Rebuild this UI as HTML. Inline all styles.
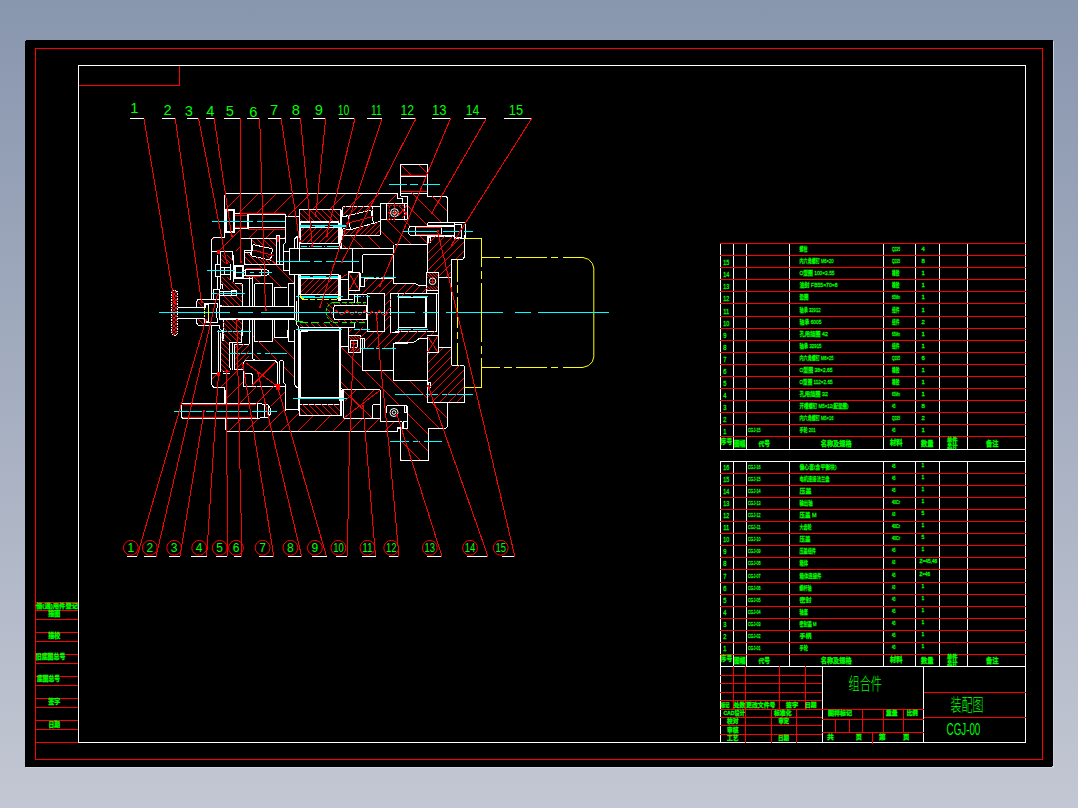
<!DOCTYPE html>
<html lang="zh"><head><meta charset="utf-8"><title>CGJ-00 装配图</title>
<style>
html,body{margin:0;padding:0;width:1078px;height:808px;overflow:hidden;background:#a6aec0;}
body{background:linear-gradient(to bottom,#8896ae 0px,#c3c7d3 808px);font-family:"Liberation Sans","Noto Sans CJK SC",sans-serif;}
svg{position:absolute;left:0;top:0;display:block}
text{font-family:"Liberation Sans","Noto Sans CJK SC",sans-serif;fill:#00ff00}
.w{stroke:#fff;fill:none;stroke-width:1}
.r{stroke:#ff0000;fill:none;stroke-width:1}
.c{stroke:#00ffff;fill:none;stroke-width:1}
.y{stroke:#ffff00;fill:none;stroke-width:1}
.g{stroke:#00ff00;fill:none;stroke-width:1}
.aa{shape-rendering:geometricPrecision}
</style></head><body>
<svg width="1078" height="808" viewBox="0 0 1078 808" shape-rendering="crispEdges">
<!-- 01_frame.svg -->
<path d="M1053.5 41V767.5M26 767.5H1054" stroke="#cdd3e2" stroke-width="1" fill="none"/>
<rect x="25" y="40" width="1028" height="727" rx="2" ry="2" fill="#000"/>
<rect x="35.5" y="48.5" width="1007" height="711" class="r"/>
<path class="r" d="M35 602.5H78M35 610.5H78M35 619.5H78M35 632.5H78M35 641.5H78M35 654.5H78M35 663.5H78M35 676.5H78M35 685.5H78M35 698.5H78M35 707.5H78M35 720.5H78M35 729.5H78M35 742.5H78"/>
<path class="r" d="M78 85.5H180M179.5 65V86"/>
<rect x="78.5" y="65.5" width="947" height="677" class="w"/>

<!-- 02_tables.svg -->
<path class="w" d="M720.5 243V450M733.5 243V450M746.5 243V450M789.5 243V450M883.5 243V450M915.5 243V450M939.5 243V450M967.5 243V450M720 449.5H1026M720.5 461V667M733.5 461V667M746.5 461V667M789.5 461V667M883.5 461V667M915.5 461V667M939.5 461V667M967.5 461V667M720 461.5H1026M720 666.5H1026M720.5 666V743M822.5 666V743M923.5 666V743"/>
<path class="r" d="M720 243.5H1026M720 255.5H1026M720 267.5H1026M720 279.5H1026M720 291.5H1026M720 303.5H1026M720 316.5H1026M720 328.5H1026M720 340.5H1026M720 352.5H1026M720 364.5H1026M720 376.5H1026M720 388.5H1026M720 400.5H1026M720 412.5H1026M720 424.5H1026M720 436.5H1026M720 473.5H1026M720 485.5H1026M720 497.5H1026M720 509.5H1026M720 521.5H1026M720 533.5H1026M720 545.5H1026M720 557.5H1026M720 569.5H1026M720 582.5H1026M720 594.5H1026M720 606.5H1026M720 618.5H1026M720 630.5H1026M720 642.5H1026M720 654.5H1026M733.5 666V710M745.5 666V710M779.5 666V710M805.5 666V710M720 675.5H822M720 683.5H822M720 692.5H822M720 700.5H822M720 709.5H924M720 717.5H822M720 725.5H822M720 734.5H822M745.5 709V743M771.5 709V743M796.5 709V743M822 719.5H924M822 732.5H924M835.5 719V733M849.5 719V733M862.5 709V733M883.5 709V733M903.5 709V733M872.5 732V744M924 692.5H1026M924 717.5H1026"/>

<!-- 10_t_200_180.svg -->
<path class="w" d="M224.5 237.6L224.5 196L226.6 193.5L307.9 193.5M224.5 237.6L214 237.6L211.5 240.1L211.5 261M211.5 251.6L232.1 251.6L232.1 261M220.5 251.6L220.5 261M225.6 209.1L234.6 209.1L234.6 232.6L225.6 232.6ZM226.9 210.9L233.3 210.9L233.3 231.3L226.9 231.3ZM234.6 213.6L248.1 213.6M234.6 228.6L248.1 228.6M247.3 213.6L247.3 228.6M248.3 213.6L248.3 228.6M248.1 214.8L285.2 214.8M248.1 227.8L285.2 227.8M285.2 213.6L285.2 243.1L283.7 244.6L283.7 261M285.2 216.9L299.2 216.9M299.2 209.6L299.2 261M299.2 209.6L307.9 209.6M240.1 238.1L285.2 238.1M240.1 238.1L240.1 261M276.7 261L276.7 235.1L279.7 235.1L279.7 261M251.6 239.1L251.6 250.1L244.1 250.1L244.1 261M253.1 244.6L272.6 248.9L270.5 260.2L251.1 255.9ZM283.7 251.6L289.2 251.6M289.2 248.1L307.9 248.1M289.2 248.1L289.2 261M294.2 239.1L297.7 236.1L297.7 248.1M294.2 239.1L294.2 248.1"/>
<path class="r" d="M235.1 215.1L247.1 215.1M235.1 227.1L247.1 227.1M240.1 213.1L285.2 213.1M248.1 229.1L285.2 229.1M277.4 236.1L278.7 236.1L278.7 241.6L277.4 241.6ZM278 236.1L278 241.6M241.3 193.7L226.1 208.9M258.3 193.7L238.6 213.4M276.3 193.7L257.1 212.9M293.3 193.7L274.1 212.9M307.9 196.1L287.3 216.7M214.2 237.8L211.7 240.3M240.9 229.1L218.6 251.4M257.8 229.2L249.1 237.9M240.1 246.9L235.6 251.4M274.8 229.2L266.1 237.9M285.2 236.8L284.1 237.9"/>
<path class="c" d="M212 221.4L252.6 221.4M257.1 221.4L285.2 221.4"/>

<!-- 11_t_300_180.svg -->
<path class="w" d="M300 193.5L397.7 193.5L397.7 198L402.2 198L402.2 203.5M400.7 180L400.7 196M400.7 196L407.9 196M300 209.6L339.9 209.6L340.6 210.3L340.6 248.1M341.6 209.6L341.6 248.1M300 221.6L338.6 221.6M300 222.6L338.6 222.6M338.6 221.6L338.6 244.1M339.6 222.6L339.6 248.1M300.5 222.6L300.5 244.1M300.5 227.6L338.6 227.6M300.5 243.6L338.6 243.6M300 248.6L393.2 248.6"/>
<path class="r" d="M401.2 191.5L407.9 191.5M300.0 219.0L302.3 221.3M300.0 213.0L308.3 221.3M303.1 210.1L314.3 221.3M310.1 210.1L321.3 221.3M316.1 210.1L327.3 221.3M322.1 210.1L333.3 221.3M328.1 210.1L339.3 221.3M334.1 210.1L340.1 216.1M303.9 228.1L300.8 231.2M309.9 228.1L300.8 237.2M315.9 228.1L300.8 243.2M321.9 228.1L306.7 243.3M327.9 228.1L312.7 243.3M333.9 228.1L318.7 243.3M338.4 229.6L324.7 243.3M338.4 235.6L330.7 243.3M338.4 242.6L337.7 243.3M310.3 193.7L300.0 204.0M328.3 193.7L312.8 209.2M345.3 193.7L329.8 209.2M362.3 193.7L349.6 206.4M379.3 193.7L366.6 206.4M397.3 193.7L387.7 203.3"/>
<path class="c" d="M389.2 184.5L406.7 184.5M300 225.3L310 225.3M312 225.3L328.1 225.3M330.1 225.3L345.6 225.3M300 226.3L310 226.3M315 226.3L325.1 226.3M333.1 226.3L345.6 226.3M301 246.3L307 246.3M308.5 246.3L310 246.3M311.5 246.3L322 246.3M323.5 246.3L325.1 246.3M326.6 246.3L338.6 246.3"/>

<!-- 12_t_338_200.svg -->
<path class="w" d="M342.5 216.7L342.5 207.4L343.5 206.4L380.4 206.4M342.5 228.7L342.5 235.1L380.4 235.1M372.8 206.4L372.8 221.4M372 210L372 215.7M380.4 203L380.4 235.1M380.4 203.2L407.9 203.2M386.5 203.7L386.5 219.4M380.4 219.4L407.9 219.4M404.8 203.7L404.8 219.4M407.9 203.2L407.9 219.4M348 215.7L370.8 210L373.4 223.4L350.4 229.7ZM343 216.7L348 215.7M343 228.7L350.4 229.7M373.4 223.4L380.4 221.4"/>
<path class="r" d="M346 223.7L373.4 216.4M345.5 206.5L342.7 209.3M351.5 206.5L342.7 215.3M357.5 206.5L348.4 215.6M363.5 206.5L356.4 213.6M369.5 206.5L364.4 211.6M372.6 209.4L372.0 210.0M345.7 229.3L342.7 232.3M350.1 229.9L345.0 235.0M356.9 228.1L350.0 235.0M363.8 226.2L355.0 235.0M370.8 224.2L360.0 235.0M377.8 222.2L365.0 235.0M380.3 224.7L370.0 235.0M380.3 229.7L375.0 235.0M380.3 234.7L380.0 235.0"/>
<circle class="w aa" cx="394.5" cy="212.7" r="4"/><circle class="w aa" cx="394.5" cy="212.7" r="1.8"/>
<path class="r" stroke-dasharray="2 1" d="M387 205.5H405M387 219H405M389.5 205.5V219M394.5 203V222M388 212.7H400"/>
<path class="r" d="M398 216L407 205.5M399 205.5L407 215M402 218L407 212.5"/>

<!-- 13_t_395_160.svg -->
<path class="w" d="M400.5 193.6L400.5 164.5L427.6 164.5L427.6 196.1L445.6 196.1L447.6 198.1L447.6 222.6M397.5 193.6L397.5 198.1L402 198.1L402 203.6M400.5 193.6L427.6 193.6M402 196.6L407.5 196.6L407.5 219.6L395 219.6M395 203.6L407 203.6M401 176.2L427.1 176.2M427.6 222.6L465.1 222.6L465.1 238.7M427.6 222.6L427.6 226.6M427.6 225.6L454.6 225.6M415.5 226.6L454.6 226.6M410 226.6L415.5 226.6M410 235.2L454.6 235.2M441.1 236.2L454.6 236.2M408 229.1L410 226.6M408 232.6L410 235.2M408 229.1L408 232.6M415.5 226.6L415.5 235.2M441.6 226.6L441.6 235.2M454.6 222.6L454.6 238.7M454.6 224.1L461.6 224.1L461.6 237.2L454.6 237.2M427.6 236.2L427.6 241M427.6 236.2L441.1 236.2"/>
<path class="r" d="M401 175.2L427.1 175.2M401 191.9L427.1 191.9M415.5 227.6L441.6 227.6M415.5 234.3L441.6 234.3M400.7 164.7L411.0 175.0M418.7 164.7L427.4 173.4M407.7 205.7L422.1 220.1M411.1 192.1L441.4 222.4M432.3 196.3L447.4 211.4"/>
<path class="c" d="M395 184.3L407 184.3M410 184.3L418 184.3M423.1 184.3L440.1 184.3M402 231.4L436.6 231.4M443.1 231.4L460.1 231.4M464.1 231.4L473.2 231.4"/>

<!-- 14_t_395_235.svg -->
<path class="w" d="M427.6 235.5L427.6 272.6M427.6 235.5L454.6 235.5M455.1 238L464.1 238M464.1 235L464.1 257.5L463.1 259L451.6 259L451.6 316M438.6 277.6L451.6 277.6M426.6 272.6L438.6 272.6L438.6 290.6L426.6 290.6ZM428.6 237L430.6 237L430.6 242L428.6 242ZM395 244.5L427.6 244.5M395 283.6L415 283.6L419 285.6L426.6 285.6M395 293.6L438.1 293.6M398 294.1L398 316M398 297.1L426.1 297.1M425.6 297.1L425.6 316M426.6 297.1L426.6 316M436.6 294.1L436.6 316M438.6 290.6L438.6 316M426.6 290.6L426.6 294.1"/>
<path class="r" d="M428.3 235.7L427.8 236.2M436.3 235.7L427.8 244.2M445.3 235.7L427.8 253.2M453.3 235.7L427.8 261.2M459.8 238.2L427.8 270.2M463.9 242.1L433.6 272.4M463.9 251.1L456.2 258.8M451.4 263.6L438.8 276.2M451.4 271.6L445.6 277.4M426.8 276.8L427.6 277.6M426.8 273.8L430.6 277.6M428.8 272.8L433.6 277.6M431.8 272.8L436.6 277.6M434.8 272.8L438.4 276.4M437.8 272.8L438.4 273.4M426.8 288.8L428.4 290.4M426.8 285.8L431.4 290.4M429.6 285.6L434.4 290.4M432.6 285.6L437.4 290.4M435.6 285.6L438.4 288.4M429.6 281.4L435.6 281.4M432.6 278.6L432.6 284.4M397.2 283.8L395.0 286.0M406.2 283.8L396.6 293.4M414.2 283.8L404.6 293.4M420.2 285.8L412.6 293.4M426.6 288.4L421.6 293.4"/>
<path class="c" d="M397 296.1L405 296.1M407 296.1L411 296.1M413 296.1L428.1 296.1M395 312.5L415 312.5M423.1 312.5L438.1 312.5M446.1 312.5L502.9 312.5"/>
<path class="y" d="M464.1 238.5L481.7 238.5L481.7 267.1M481.7 270.6L481.7 279.1M481.7 283.1L481.7 316M481.7 257.5L499.7 257.5M457.6 259L457.6 282.1M457.6 285.1L457.6 293.1M457.6 297.1L457.6 316"/>
<circle class="w aa" cx="432.5" cy="281.3" r="3.3"/>

<!-- 15_t_200_255.svg -->
<path class="w" d="M211.5 255L211.5 298.6M217.5 255L217.5 264M220.5 255L220.5 264M215.5 264L220.5 264L220.5 276.5L215.5 276.5ZM220.5 267.5L230.1 267.5M220.5 274L230.1 274M224 267.5L224 274M230.1 264L230.1 280.1M217.5 276.5L217.5 289.1M220.5 276.5L220.5 289.1M235.6 266.5L242.1 266.5L242.1 277L235.6 277ZM234.6 265.5L243.1 265.5L243.1 278L234.6 278ZM245.6 269.2L264.1 269.2L268.1 270.2L268.6 272.5L268.1 274.8L264.1 275.7L245.6 275.7M245.6 269.2L245.6 275.7M261.6 269.2L261.6 275.7M264.1 269.2L264.1 275.7M233.1 255L233.1 282.1M243.1 270L245.6 270M243.1 275L245.6 275M213.5 289.1L219 289.1L219 299.1L213.5 299.1ZM219 291.3L236.1 291.3M219 295.1L236.1 295.1M223 291.3L223 295.1M231.6 290.6L236.1 290.6L236.1 295.6L231.6 295.6ZM220.5 284.1L222.5 284.1L222.5 289.1M242.1 283.6L242.1 306.6M234.6 283.6L242.1 283.6M249.6 277L249.6 306.6M252.1 277L252.1 306.6M243.1 278L252.1 278M254.6 283.6L254.6 306.6M254.6 283.6L272.1 283.6L272.1 306.6M274.1 287.6L274.1 306.6M274.1 287.6L287.2 287.6M288.2 283.6L288.2 306.6M288.2 283.6L294.2 283.6M283.7 255L283.7 270L289.2 270L289.2 274L307.9 274M289.2 255L289.2 270M294.7 275L294.7 320.1M298.7 275L298.7 321.1M299.7 275L299.7 295.1M276.7 255L276.7 263.5M279.7 255L279.7 263.5M219 306.6L294.7 306.6M219 318.6L294.7 318.6M219 306.6L219 318.6M223 319.6L223 336M242.1 319.6L242.1 336M249.6 319.6L249.6 336M252.1 319.6L252.1 336M254.6 319.6L254.6 336M272.1 319.6L272.1 336M274.1 319.6L274.1 336M288.2 319.6L288.2 336M219 319.6L294.7 319.6M296.2 301.1L296.2 324.1L298.7 327.1L298.7 336M300.2 329.1L307.9 329.1"/>
<path class="c" d="M207 270.5L234.6 270.5M235.6 272.5L245.1 272.5M250.1 272.5L254.1 272.5M258.6 272.5L271.6 272.5M212 293.4L245.1 293.4M200 312.4L230.1 312.4M238.1 312.4L253.1 312.4M261.1 312.4L307.9 312.4M277.2 261.8L307.9 261.8M299.2 276.5L307.9 276.5M296.2 296.9L307.9 296.9M217 331.7L251.1 331.7M296.2 329.6L307.9 329.6"/>
<path class="r" d="M245.6 268.5L261.1 268.5M245.6 276.3L261.1 276.3M221.0 259.0L225.5 263.5M222.0 255.0L230.5 263.5M227.0 255.0L232.6 260.6M223.0 289.0L224.1 290.1M221.0 281.0L230.1 290.1M222.0 277.0L235.1 290.1M227.0 277.0L230.1 280.1M231.6 281.6L240.6 290.6M239.6 283.6L241.6 285.6M223.0 305.0L224.1 306.1M223.0 300.0L229.1 306.1M223.6 295.6L234.1 306.1M229.6 295.6L240.1 306.1M235.6 295.6L241.6 301.6M240.6 295.6L241.6 296.6M223.5 333.5L226.0 336.0M223.5 327.5L232.0 336.0M223.5 322.5L237.0 336.0M226.1 320.1L241.6 335.6M232.1 320.1L241.6 329.6M238.1 320.1L241.6 323.6M245.1 268.1L245.5 268.5M254.3 277.3L260.1 283.1M249.0 255.0L262.9 268.9M269.1 275.1L281.1 287.1M266.0 255.0L294.1 283.1M303.0 277.0L300.2 279.8M307.9 279.1L300.2 286.8M307.9 285.1L300.2 292.8M307.9 291.1L304.4 294.6"/>
<path class="y" d="M300.2 295.1L301.2 298.6L306.2 299.3"/>
<path class="g" d="M295.2 320.6L299.2 321.6L307.9 322.6"/>

<!-- 16_t_300_245.svg -->
<path class="w" d="M340.6 248.5L393.2 248.5M393.2 245L393.2 283.1L407.9 283.1M352.6 248.5L352.6 271.6M362.6 254.5L393.2 254.5M362.6 254.5L362.6 272.6M360.1 272.6L360.1 286.1L364.1 286.1L364.1 278.6M364.1 278.6L393.2 278.6M300.5 274.6L338.6 274.6M300.5 274.6L300.5 295.1M301 278.6L338.1 278.6M301 294.6L338.1 294.6M338.6 274.6L338.6 301.1M339.6 274.6L339.6 301.1M340.6 274.6L340.6 301.1M338.1 278.6L338.1 294.6M348.6 272.6L359.6 272.6L359.6 290.6L348.6 290.6ZM340.6 279.1L348.1 279.1M348.1 271.6L348.1 299.1M348.1 271.6L352.6 271.6M340.6 299.1L353.1 299.1M348.6 294.1L354.6 294.1M354.6 302.6L354.6 295.1L356.1 294.1L366.1 294.1L367.1 295.1L367.1 326M357.1 295.1L357.1 302.6M367.1 293.1L384.2 293.1L384.2 326M390.7 293.1L390.7 326M390.7 293.1L398.2 293.1M398.7 296.1L398.7 326M333.1 309.1L334.6 305.6L366.1 305.6L366.1 319.6L334.6 319.6L333.1 315.1Z"/>
<path class="c" d="M300 261.3L310 261.3M314 261.3L322 261.3M326.1 261.3L359.1 261.3M361.1 277.4L374.1 277.4M376.2 277.4L379.2 277.4M381.2 277.4L396.2 277.4M301 276.3L310 276.3M313 276.3L326.1 276.3M329.1 276.3L338.1 276.3M301 277L338.1 277M301 296.3L315 296.3M320 296.3L343.1 296.3M301 297L338.1 297M397.2 296.1L407.9 296.1M397.2 296.8L407.9 296.8M355.1 296.4L361.1 296.4M362.6 296.4L364.1 296.4M365.6 296.4L369.6 296.4M300 312.4L407.9 312.4"/>
<path class="y" d="M301 295.6L301 298.1L303 299.6M338.1 295.6L338.1 298.1L336.6 299.6M303 299.6L308 299.6M310 299.6L315 299.6M317 299.6L322 299.6M324 299.6L329.1 299.6M331.1 299.6L336.6 299.6"/>
<path class="r" d="M307.9 279.1L301.0 286.0M313.9 279.1L301.0 292.0M319.9 279.1L304.7 294.3M325.9 279.1L310.7 294.3M331.9 279.1L316.7 294.3M337.9 279.1L322.7 294.3M337.9 285.1L328.7 294.3M337.9 291.1L334.7 294.3M349.1 273.1L359.1 290.1M359.1 273.1L349.1 290.1M341.1 278.1L347.1 274.1M367.9 279.1L364.6 282.4M360.4 286.6L360.1 286.9M355.9 291.1L354.6 292.4M376.9 279.1L362.4 293.6M384.9 279.1L371.1 292.9M392.9 279.1L379.1 292.9M397.4 283.6L384.7 296.3M406.4 283.6L397.1 292.9M390.7 299.3L384.7 305.3M407.9 290.1L402.4 295.6M390.7 307.3L384.7 313.3M390.7 315.3L384.7 321.3M390.7 324.3L389.0 326.0M335.1 310.1L342.1 315.1L347.1 310.6L352.1 315.1L356.1 311.1L360.1 315.1L364.1 310.6L369.1 315.1L372.1 311.1L376.2 314.1L377.2 319.1M376.2 314.1L379.2 310.6L382.2 314.1L385.2 315.1L388.2 312.1M326.6 314.6L334.2 322.2M326.6 308.6L332.6 314.6M337.8 319.8L340.2 322.2M327.1 303.1L332.8 308.8M343.8 319.8L346.2 322.2M333.1 303.1L335.4 305.4M349.8 319.8L352.2 322.2M339.1 303.1L341.4 305.4M355.8 319.8L358.2 322.2M345.1 303.1L347.4 305.4M361.8 319.8L364.2 322.2M351.1 303.1L353.4 305.4M357.1 303.1L359.4 305.4M363.1 303.1L365.4 305.4"/>
<path class="g aa" stroke-dasharray="3 1.5" d="M333.1 302.1L329.6 304.1L326.6 308.1L326.1 312.6L327.1 317.1L330.1 320.7L333.1 322.4"/>
<path class="g" d="M333.1 302.1L340.1 302.1M342.1 302.1L347.1 302.1M349.1 302.1L354.1 302.1M356.1 302.1L361.1 302.1M363.1 302.1L366.1 302.1M300 322.7L306 322.7M311 322.7L319 322.7M324 322.7L330.1 322.7M333.1 322.7L338.1 322.7M342.1 322.7L347.1 322.7M350.1 322.7L356.1 322.7M359.1 322.7L365.1 322.7"/>

<!-- 17_t_200_330.svg -->
<path class="w" d="M211.5 330L211.5 384.6L214 387.6L224.5 387.6L224.5 402.6M211.5 373.6L218 373.6M223 371.1L230.1 371.1M223 373.1L230.1 373.1M218 330L218 373.1M220.5 333L220.5 372.1M229.1 366.1L229.1 343L230.6 342L241.1 342L241.1 330M229.1 366.1L231.1 370.1M232.6 342.5L232.6 369.6M234.1 344L249.1 344M234.1 344L234.1 369.1M249.6 330L249.6 344M234.1 369.1L243.1 369.1M252.1 330L252.1 358.1L254.6 360.1L260.1 360.1M254.6 330L254.6 341L272.1 341L272.1 330M274.1 330L274.1 337.5L287.2 337.5L287.2 330M288.2 330L288.2 341.5L294.2 341.5M294.7 330L294.7 384.1L296.7 387.6L299.2 388.6M245.6 360.6L275.2 360.6L277.2 362.6L277.2 386.1L243.6 386.1L243.6 362.6ZM244.1 373.1L250.6 373.1L252.1 374.6L252.1 386.1M279.7 360.6L279.7 386.1M283.2 360.6L283.2 382.1L285.7 384.6L285.7 411M279.7 360.6L283.2 360.6M277.2 386.1L285.7 386.1M298.7 330L298.7 411M299.7 330L299.7 411M300.7 331L307.9 331M300.7 331L300.7 397.1L307.9 397.1M223 330L223 341"/>
<path class="c" d="M217 331.5L250.6 331.5M229.1 353.5L253.1 353.5M257.1 353.5L261.1 353.5M265.1 353.5L286.7 353.5M293.2 398.4L307.9 398.4"/>
<path class="r" d="M245.6 362.6L276.2 385.6M275.2 362.1L252.1 385.6M276.4 384.3L279 384.3L279 389.1L276.4 389.1ZM277.2 384.3L277.2 389.1M278.2 384.3L278.2 389.1M217.7 372.3L219.8 372.3L219.8 375.1L217.7 375.1ZM218.7 372.3L218.7 375.1M223.5 371.6L229.6 371.6M221.0 369.0L223.2 371.2M221.0 364.0L227.6 370.6M221.0 359.0L229.1 367.1M221.0 353.0L228.6 360.6M221.0 347.0L228.6 354.6M221.0 342.0L228.6 349.6M221.0 337.0L228.6 344.6M223.5 333.5L228.6 338.6M223.5 333.5L231.5 341.5M226.0 330.0L237.5 341.5M231.0 330.0L240.6 339.6M236.0 330.0L240.6 334.6M238.5 344.5L234.6 348.4M243.5 344.5L234.6 353.4M248.9 345.1L234.6 359.4M248.9 351.1L234.6 365.4M248.9 356.1L244.2 360.8M243.1 361.9L236.4 368.6M243.1 366.9L241.4 368.6M216.9 374.1L212.0 379.0M238.4 369.6L220.7 387.3M243.1 381.9L225.1 399.9M256.7 386.3L240.1 402.9M273.7 386.3L257.1 402.9M285.7 391.3L274.1 402.9M252.6 352.6L259.7 359.7M252.6 335.6L254.1 337.1M258.5 341.5L277.0 360.0M283.7 366.7L294.2 377.2M273.5 338.5L294.2 359.2M294.0 342.0L294.2 342.2"/>

<!-- 18_t_300_320.svg -->
<path class="w" d="M300 327.5L340.1 327.5M300.5 330.5L300.5 397.7M301 330.8L339.1 330.8M339.1 330.8L339.1 397.2M301 397.2L339.1 397.2M339.8 327L339.8 401M340.8 327L340.8 401M341.1 327L348.6 327L348.6 346.6L341.1 346.6M348.6 327L354.1 327L354.1 323M348.6 335.5L360.1 335.5L360.1 352.1L348.6 352.1ZM350.1 340.5L357.6 340.5L357.6 347.1L350.1 347.1ZM360.1 338.5L364.1 338.5L364.1 348.6M362.1 338.5L362.1 370.6L393.2 370.6L393.2 343L407.9 343M393.2 370.6L393.2 380.1L407.9 380.1M367.1 320L367.1 331.5L384.2 331.5L384.2 320M390.7 320L390.7 332L398.2 332L398.2 320M398.7 328.5L398.7 320M341.1 388.6L342.6 389.1L379.2 389.1L380.7 390.6L380.7 401M342.6 389.1L342.6 401"/>
<path class="c" d="M300 329.2L315 329.2M318 329.2L322 329.2M325.1 329.2L342.1 329.2M300 329.9L340.1 329.9M354.1 329.2L361.1 329.2M362.6 329.2L365.1 329.2M366.6 329.2L370.1 329.2M354.1 329.9L370.1 329.9M397.2 329.2L407.9 329.2M397.2 329.9L407.9 329.9M361.1 348.6L374.1 348.6M376.2 348.6L379.2 348.6M382.2 348.6L396.2 348.6M300 398.2L347.1 398.2M300 397.5L306 397.5M309 397.5L330.1 397.5M333.1 397.5L340.1 397.5M394.7 394.4L407.9 394.4"/>
<path class="r" d="M351.1 343.7L356.6 343.7M353.8 341L353.8 346.6M349.1 340.1L349.3 340.3M349.1 337.1L352.3 340.3M351.0 336.0L355.3 340.3M354.0 336.0L358.3 340.3M357.0 336.0L359.9 338.9M351.7 347.3L349.1 349.9M354.7 347.3L350.1 351.9M357.7 347.3L353.1 351.9M359.9 348.1L356.1 351.9M359.9 351.1L359.1 351.9M351.6 329.4L349.1 331.9M362.5 327.5L355.0 335.0M366.6 331.4L360.1 337.9M386.0 320.0L384.7 321.3M374.0 332.0L364.6 341.4M390.2 324.8L384.7 330.3M383.0 332.0L366.9 348.1M391.5 332.5L375.9 348.1M402.0 330.0L383.9 348.1M407.9 332.1L397.5 342.5M392.7 347.3L391.9 348.1M407.9 341.1L406.5 342.5M341.3 382.3L347.6 388.6M341.3 364.3L365.6 388.6M341.3 347.3L361.4 367.4M365.1 371.1L395.0 401.0M382.1 371.1L407.9 396.9M356.4 389.6L345.0 401.0M374.4 389.6L363.0 401.0M380.2 400.8L380.0 401.0M300.0 324.0L303.2 327.2M305.0 323.0L309.2 327.2M311.0 323.0L315.2 327.2M317.0 323.0L321.2 327.2M323.0 323.0L327.2 327.2M329.0 323.0L333.2 327.2M335.0 323.0L339.2 327.2"/>

<!-- 19_t_395_310.svg -->
<path class="w" d="M398 310L398 327.5L426.1 327.5M425.6 310L425.6 327.5M426.6 310L426.6 327.5M436.6 310L436.6 330.5M438.6 310L438.6 347.6L451.6 347.6M395 331L436.6 331M395 342.6L413.5 342.6L419 338.6L426.6 338.6M427.1 335.6L438.1 335.6L438.1 352.6L427.1 352.6ZM427.6 352.6L427.6 391M451.6 310L451.6 365.1L463.1 365.1L464.6 366.6L464.6 391M395 380.6L427.6 380.6M428.6 382.6L430.6 382.6L430.6 387.7L428.6 387.7Z"/>
<path class="r" d="M427.6 336.1L437.6 352.1M437.6 336.1L427.6 352.1M430.2 352.8L427.8 355.2M443.2 347.8L438.6 352.4M438.2 352.8L427.8 363.2M451.4 348.6L427.8 372.2M451.4 356.6L427.8 380.2M451.7 365.3L427.8 389.2M459.7 365.3L434.0 391.0M464.4 369.6L443.0 391.0M464.4 377.6L451.0 391.0M464.4 386.6L460.0 391.0M400.8 331.2L395.0 337.0M408.8 331.2L397.6 342.4M417.8 331.2L406.6 342.4M426.8 331.2L419.6 338.4M434.8 331.2L430.6 335.4M395.0 384.0L402.0 391.0M410.1 381.1L420.0 391.0"/>
<path class="c" d="M395 312.3L415 312.3M423.1 312.3L438.1 312.3M446.1 312.3L502.9 312.3M397 329L405 329M407 329L411 329M413 329L428.1 329"/>
<path class="y" d="M457.6 310L457.6 328M457.6 332L457.6 339.1M457.6 343.1L457.6 365.1M481.7 310L481.7 342.1M481.7 346.1L481.7 354.1M481.7 358.1L481.7 387.2L464.1 387.2M481.7 367.4L499.7 367.4"/>

<!-- 20_t_395_385.svg -->
<path class="w" d="M427.6 385L427.6 402.5L464.6 402.5L464.6 385M447.6 402.5L447.6 426.6L445.6 428.6L428.1 428.6L428.1 460.2L400.5 460.2L400.5 428.1L397 428.1L397 431.6L395 431.6M395 405.5L406 405.5L407.5 406.5L407.5 428.6L402.5 428.6M404.5 405.5L404.5 412.6L407.5 412.6M402.5 421.6L407.5 421.6M402.5 421.6L402.5 428.6"/>
<path class="y" d="M464.1 387L481.7 387L481.7 385"/>
<path class="c" d="M395 394.5L423.1 394.5M426.1 394.5L438.1 394.5M442.1 394.5L473.2 394.5M395 441.4L409 441.4M413 441.4L420.1 441.4M424.1 441.4L442.1 441.4"/>
<path class="r" d="M432.0 385.0L427.8 389.2M440.0 385.0L427.8 397.2M449.0 385.0L431.7 402.3M457.0 385.0L439.7 402.3M464.4 386.6L448.7 402.3M464.4 394.6L456.7 402.3M405.1 428.1L418.1 441.1M395.0 401.0L399.0 405.0M408.0 414.0L427.6 433.6M396.0 385.0L439.1 428.1M414.0 385.0L427.1 398.1M432.0 403.0L447.1 418.1M401.0 459.0L401.6 459.6M401.1 441.1L419.6 459.6M418.1 441.1L427.6 450.6"/>

<!-- 21_t_300_390.svg -->
<path class="w" d="M300.5 390L300.5 397L339.1 397L339.1 390M300 404L340.1 404M300 415.4L342.1 415.4M340.1 390L340.1 415.1M341.1 390L341.1 415.4M343.1 390L343.1 418.6L380.2 418.6M372.6 404.5L380.2 404.5M372.6 404.5L372.6 418.1M380.7 390L380.7 421.6L402.2 421.6M300 431.4L397.2 431.4L397.2 427.6L400.2 427.6L400.2 460.6L407.9 460.6M386.7 405.5L406.7 405.5M386.7 405.5L386.7 413M403.2 422.1L403.2 428.1L407.9 428.1M406.7 405.5L406.7 413"/>
<path class="c" d="M300 398L306 398M310 398L330.1 398M333.1 398L340.1 398M300 398.7L347.1 398.7M394.7 394.5L407.9 394.5M390.2 441.4L407.9 441.4"/>
<path class="r" d="M343.6 390.5L371.6 417.6M343.1 418.6L379.7 390.5M300.0 414.0L301.1 415.1M300.0 408.0L307.1 415.1M302.3 404.3L313.1 415.1M308.3 404.3L319.1 415.1M314.3 404.3L325.1 415.1M321.3 404.3L332.1 415.1M327.3 404.3L338.1 415.1M333.3 404.3L339.9 410.9M339.3 404.3L339.9 404.9M313.3 415.7L300.0 429.0M330.3 415.7L314.9 431.1M345.1 418.9L332.9 431.1M362.1 418.9L349.9 431.1M379.1 418.9L366.9 431.1M394.1 421.9L384.9 431.1"/>
<circle class="w aa" cx="394" cy="412.5" r="4"/><circle class="w aa" cx="394" cy="412.5" r="1.8"/>

<!-- 22_t_170_390.svg -->
<path class="w" d="M182.8 403.4L256.4 403.4L268 404.7L270.5 409.2L270.5 413.7L268 417.1L256.4 418.4L182.8 418.4L181.5 417.1L181.5 404.7ZM257.7 403.8L257.7 418.2M264.8 404.3L264.8 417.7M268 404.7L268 417.1M225.1 390L225.1 402.8M225.1 419.2L225.1 428.4L227 431.4L307.9 431.4M285.9 390L285.9 409.2L299.3 409.2M299.3 390L299.3 415L307.9 415"/>
<path class="r" d="M182.8 404.5L256.4 404.5M182.8 417.4L256.4 417.4M235.0 390.0L225.7 399.3M253.0 390.0L238.9 404.1M270.0 390.0L255.9 404.1M241.2 418.8L229.3 430.7M285.2 391.8L271.2 405.8M258.2 418.8L246.3 430.7M285.2 408.8L263.3 430.7M298.7 413.3L281.3 430.7M307.9 421.1L298.3 430.7"/>
<path class="c" d="M173.8 411.4L202 411.4M205.9 411.4L213.5 411.4M215.5 411.4L248.1 411.4M251.9 411.4L276.9 411.4M292.9 398.6L307.9 398.6"/>

<!-- 23_t_150_270.svg -->
<path class="r" d="M174.0 290.0L171.5 292.5M176.9 291.1L171.5 296.5M177.3 294.7L171.5 300.5M177.3 298.7L171.5 304.5M177.3 302.7L171.5 308.5M177.3 306.7L171.5 312.5M177.3 310.7L171.5 316.5M177.3 314.7L171.5 320.5M177.3 318.7L171.5 324.5M177.3 322.7L171.5 328.5M177.3 326.7L171.5 332.5M177.3 330.7L172.9 335.1M171.5 331.5L175.6 335.6M171.5 327.5L177.3 333.3M171.5 323.5L177.3 329.3M171.5 319.5L177.3 325.3M171.5 315.5L177.3 321.3M171.5 311.5L177.3 317.3M171.5 307.5L177.3 313.3M171.5 303.5L177.3 309.3M171.5 299.5L177.3 305.3M171.5 295.5L177.3 301.3M171.5 291.5L177.3 297.3M174.0 290.0L177.3 293.3"/>
<path class="w" d="M177.6 307.6L205.1 307.6M177.6 318L205.1 318M196.4 307L196.4 301.9L198 299.4L219.9 299.4M196.4 307L204.1 307M204.1 303L217.3 303M204.1 303L204.1 307.6M217.3 303L217.3 307.6M205.1 304L208.7 304L208.7 307.6M205.1 304L205.1 307.6M196.4 318.3L196.4 322.9L198.5 325.4L219.9 325.4M196.4 318.3L204.1 318.3M204.1 318L204.1 322.9M205.6 318.8L205.6 321.3L208.7 321.3L208.7 318.3M217.3 318L217.3 322.9M204.1 322.9L217.3 322.9M219.9 298.4L219.9 305.5L221.9 306M219.9 325.4L219.9 329L222.4 331L222.4 341.2M211.2 325.4L211.2 362M216.8 307.6L216.8 318"/>
<path class="c" d="M159.2 312.4L229.6 312.4"/>
<path class="y" d="M204.4 308.1L204.4 310.1M204.4 311.1L204.4 313.7M204.4 314.7L204.4 317.2M208.4 308.1L208.4 317.8"/>
<path class="r" d="M197.3 301.3L202.7 306.7M200.9 299.9L203.9 302.9M197.8 318.8L203.9 324.9M202.8 318.8L203.9 319.9"/>
<rect class="w" x="171.5" y="290" width="6" height="45.5" rx="3" ry="3" stroke-dasharray="1.5 1"/>

<!-- 24_t_440_230.svg -->
<path class="y" d="M481.4 257.5L499.4 257.5M504.1 257.5L511.5 257.5M516.1 257.5L546.8 257.5M550.5 257.5L557.9 257.5M562.6 257.5L583 257.5M481.4 367.4L499.4 367.4M504.1 367.4L511.5 367.4M516.1 367.4L546.8 367.4M550.5 367.4L557.9 367.4M562.6 367.4L583 367.4"/>
<path class="y aa" d="M583 257.5L588.6 259.3L592.3 263.4L593.8 268.1L593.8 356.8L592.3 361.8L588.6 365.6L583 367.4"/>
<path class="c" d="M515.2 312.3L531 312.3M538.1 312.3L609 312.3"/>

<!-- 25_t_228_232.svg -->
<path class="r" d="M252.1 240.1L257.3 245.3M257.0 239.0L265.0 247.0M263.0 239.0L272.7 248.7M269.0 239.0L275.8 245.8M275.0 239.0L275.8 239.8M244.4 262.4L246.0 264.0M244.4 256.4L252.0 264.0M246.4 252.4L258.0 264.0M257.1 257.1L264.0 264.0M264.8 258.8L270.0 264.0M272.6 260.6L275.8 263.8M253.1 250L274.1 255.7"/>
<path class="w" d="M244 252.1L250.7 252.1L251.1 255.7M244 252.1L244 264.1M244 264.4L283.5 264.4M251.7 239L251.7 252.1M276.1 239L276.1 264.1"/>

<!-- 26_misc.svg -->
<rect x="217.2" y="249.5" width="2.6" height="4" fill="#f00"/>

<!-- 27_extra1.svg -->
<path class="r" d="M343.0 245.0L346.0 248.0M351.0 236.0L363.0 248.0M368.0 236.0L380.0 248.0M381.0 231.0L394.0 244.0M387.0 220.0L411.0 244.0M404.0 220.0L410.0 226.0M420.0 236.0L427.0 243.0M422.0 220.0L427.0 225.0"/>

<!-- 30_labels.svg -->
<path class="w" d="M130 118.5H144M162 118.5H175.3M187 118.5H198.5M206 118.5H214.2M224 118.5H240M247 118.5H259.7M268 118.5H281.1M290 118.5H300.5M313 118.5H325.7M339 118.5H355M367.3 118.5H382.2M400.8 118.5H416M432 118.5H450.5M464 118.5H486.4M504 118.5H531.7M127 556.5H137M144.2 556.5H156M169 556.5H180M191 556.5H206.6M215.8 556.5H227.4M234 556.5H242M259.2 556.5H273.8M288 556.5H301.7M312 556.5H326.5M336.2 556.5H347.3M362.2 556.5H375.6M389 556.5H399M427 556.5H442M467 556.5H488M502.2 556.5H514.8"/>
<path class="r" d="M144 118.5L174.5 303M175.3 118.5L201.5 302M198.5 118.5L226.5 262.5M214.2 118.5L231.6 235.6M240 118.5L240.6 261.5M259.7 118.5L265.5 310M281.1 118.5L299.5 241M300.5 118.5L312.4 246.2M325.7 118.5L315.7 215.5M355 118.5L326.6 235.6M382.2 118.5L320 307M416 118.5L342 261.5M450.5 118.5L380 286M486.4 118.5L432 212.5M531.7 118.5L451.5 245M137 556.5L206 319.5M156 556.5L217.5 293.5M180 556.5L204.3 410.5M206.6 556.5L218.5 373.5M227.4 556.5L226.5 371M242 556.5L239.6 450L236.8 320M273.8 556.5L243 365M301.7 556.5L258 373M326.5 556.5L277.5 386.5M347.3 556.5L349.3 450L353.5 343.5M375.6 556.5L363 406M399 556.5L389.4 450L380 360L376.5 314M442 556.5L397 414.5M488 556.5L428 385.5M514.8 556.5L489.9 450L437.5 231"/>
<circle class="r aa" cx="130.8" cy="547.8" r="7.4"/>
<circle class="r aa" cx="149.8" cy="547.8" r="7.4"/>
<circle class="r aa" cx="174.2" cy="547.8" r="7.4"/>
<circle class="r aa" cx="199.2" cy="547.8" r="7.4"/>
<circle class="r aa" cx="219.7" cy="547.8" r="7.4"/>
<circle class="r aa" cx="236" cy="547.8" r="7.4"/>
<circle class="r aa" cx="262.6" cy="547.8" r="7.4"/>
<circle class="r aa" cx="290.4" cy="547.8" r="7.4"/>
<circle class="r aa" cx="314.9" cy="547.8" r="7.4"/>
<circle class="r aa" cx="338.4" cy="547.8" r="7.4"/>
<circle class="r aa" cx="367.4" cy="547.8" r="7.4"/>
<circle class="r aa" cx="391.2" cy="547.8" r="7.4"/>
<circle class="r aa" cx="429.8" cy="547.8" r="7.4"/>
<circle class="r aa" cx="470" cy="547.8" r="7.4"/>
<circle class="r aa" cx="500.7" cy="547.8" r="7.4"/>
<rect x="173.5" y="302.0" width="2" height="2" fill="#f00"/><rect x="200.5" y="301.0" width="2" height="2" fill="#f00"/><rect x="225.5" y="261.5" width="2" height="2" fill="#f00"/><rect x="230.6" y="234.6" width="2" height="2" fill="#f00"/><rect x="239.6" y="260.5" width="2" height="2" fill="#f00"/><rect x="264.5" y="309.0" width="2" height="2" fill="#f00"/><rect x="298.5" y="240.0" width="2" height="2" fill="#f00"/><rect x="311.4" y="245.2" width="2" height="2" fill="#f00"/><rect x="314.7" y="214.5" width="2" height="2" fill="#f00"/><rect x="325.6" y="234.6" width="2" height="2" fill="#f00"/><rect x="319.0" y="306.0" width="2" height="2" fill="#f00"/><rect x="341.0" y="260.5" width="2" height="2" fill="#f00"/><rect x="379.0" y="285.0" width="2" height="2" fill="#f00"/><rect x="431.0" y="211.5" width="2" height="2" fill="#f00"/><rect x="450.5" y="244.0" width="2" height="2" fill="#f00"/><rect x="205.0" y="318.5" width="2" height="2" fill="#f00"/><rect x="216.5" y="292.5" width="2" height="2" fill="#f00"/><rect x="203.3" y="409.5" width="2" height="2" fill="#f00"/><rect x="217.5" y="372.5" width="2" height="2" fill="#f00"/><rect x="225.5" y="370.0" width="2" height="2" fill="#f00"/><rect x="235.8" y="319.0" width="2" height="2" fill="#f00"/><rect x="242.0" y="364.0" width="2" height="2" fill="#f00"/><rect x="257.0" y="372.0" width="2" height="2" fill="#f00"/><rect x="276.5" y="385.5" width="2" height="2" fill="#f00"/><rect x="352.5" y="342.5" width="2" height="2" fill="#f00"/><rect x="362.0" y="405.0" width="2" height="2" fill="#f00"/><rect x="375.5" y="313.0" width="2" height="2" fill="#f00"/><rect x="396.0" y="413.5" width="2" height="2" fill="#f00"/><rect x="427.0" y="384.5" width="2" height="2" fill="#f00"/><rect x="436.5" y="230.0" width="2" height="2" fill="#f00"/>
<g><text x="134.3" y="113.2" font-size="14.6" text-anchor="middle">1</text>
<text x="167.5" y="114.5" font-size="14.6" text-anchor="middle">2</text>
<text x="188.8" y="116" font-size="14.6" text-anchor="middle">3</text>
<text x="210.3" y="116" font-size="14.6" text-anchor="middle">4</text>
<text x="229.9" y="115.6" font-size="14.6" text-anchor="middle">5</text>
<text x="253.4" y="117" font-size="14.6" text-anchor="middle">6</text>
<text x="274" y="115.2" font-size="14.6" text-anchor="middle">7</text>
<text x="295.9" y="115.2" font-size="14.6" text-anchor="middle">8</text>
<text x="318.7" y="115.2" font-size="14.6" text-anchor="middle">9</text>
<text x="343.4" y="115.2" font-size="14.6" text-anchor="middle" textLength="11.5" lengthAdjust="spacingAndGlyphs">10</text>
<text x="376.3" y="115.2" font-size="14.6" text-anchor="middle" textLength="10.5" lengthAdjust="spacingAndGlyphs">11</text>
<text x="407.2" y="115.2" font-size="14.6" text-anchor="middle" textLength="13.5" lengthAdjust="spacingAndGlyphs">12</text>
<text x="439.3" y="115.2" font-size="14.6" text-anchor="middle" textLength="14.5" lengthAdjust="spacingAndGlyphs">13</text>
<text x="472.5" y="115.2" font-size="14.6" text-anchor="middle" textLength="13.5" lengthAdjust="spacingAndGlyphs">14</text>
<text x="515.9" y="115.2" font-size="14.6" text-anchor="middle" textLength="14.2" lengthAdjust="spacingAndGlyphs">15</text>
<text x="130.8" y="552" font-size="12" text-anchor="middle">1</text>
<text x="149.8" y="552" font-size="12" text-anchor="middle">2</text>
<text x="174.2" y="552" font-size="12" text-anchor="middle">3</text>
<text x="199.2" y="552" font-size="12" text-anchor="middle">4</text>
<text x="219.7" y="552" font-size="12" text-anchor="middle">5</text>
<text x="236" y="552" font-size="12" text-anchor="middle">6</text>
<text x="262.6" y="552" font-size="12" text-anchor="middle">7</text>
<text x="290.4" y="552" font-size="12" text-anchor="middle">8</text>
<text x="314.9" y="552" font-size="12" text-anchor="middle">9</text>
<text x="338.4" y="552" font-size="12" text-anchor="middle" textLength="10.5" lengthAdjust="spacingAndGlyphs">10</text>
<text x="367.4" y="552" font-size="12" text-anchor="middle" textLength="10.5" lengthAdjust="spacingAndGlyphs">11</text>
<text x="391.2" y="552" font-size="12" text-anchor="middle" textLength="10.5" lengthAdjust="spacingAndGlyphs">12</text>
<text x="429.8" y="552" font-size="12" text-anchor="middle" textLength="10.5" lengthAdjust="spacingAndGlyphs">13</text>
<text x="470" y="552" font-size="12" text-anchor="middle" textLength="10.5" lengthAdjust="spacingAndGlyphs">14</text>
<text x="500.7" y="552" font-size="12" text-anchor="middle" textLength="10.5" lengthAdjust="spacingAndGlyphs">15</text></g>

<!-- 40_texts.svg -->
<g stroke="#00ff00" stroke-width="0.3">
<text x="799.5" y="250.6" font-size="6.0" textLength="8" lengthAdjust="spacingAndGlyphs">螺栓</text>
<text x="892" y="250.9" font-size="6" textLength="8" lengthAdjust="spacingAndGlyphs">Q235</text>
<text x="921.5" y="250.5" font-size="6">4</text>
<text x="723.2" y="265.1" font-size="7.4" textLength="6" lengthAdjust="spacingAndGlyphs">15</text>
<text x="799.5" y="262.6" font-size="6.0" textLength="34" lengthAdjust="spacingAndGlyphs">内六角螺钉 M6×20</text>
<text x="892" y="262.9" font-size="6" textLength="8" lengthAdjust="spacingAndGlyphs">Q235</text>
<text x="921.5" y="262.5" font-size="6">8</text>
<text x="723.2" y="277.1" font-size="7.4" textLength="6" lengthAdjust="spacingAndGlyphs">14</text>
<text x="799.5" y="274.6" font-size="6.0" textLength="35" lengthAdjust="spacingAndGlyphs">O型圈 100×3.55</text>
<text x="892" y="274.9" font-size="6" textLength="7.5" lengthAdjust="spacingAndGlyphs">橡胶</text>
<text x="921.5" y="274.5" font-size="6">1</text>
<text x="723.2" y="289.1" font-size="7.4" textLength="6" lengthAdjust="spacingAndGlyphs">13</text>
<text x="799.5" y="286.6" font-size="6.0" textLength="38" lengthAdjust="spacingAndGlyphs">油封 FB55×70×8</text>
<text x="892" y="286.9" font-size="6" textLength="7.5" lengthAdjust="spacingAndGlyphs">橡胶</text>
<text x="921.5" y="286.5" font-size="6">1</text>
<text x="723.2" y="301.1" font-size="7.4" textLength="6" lengthAdjust="spacingAndGlyphs">12</text>
<text x="799.5" y="298.6" font-size="6.0" textLength="9" lengthAdjust="spacingAndGlyphs">垫圈</text>
<text x="892" y="298.9" font-size="6" textLength="8" lengthAdjust="spacingAndGlyphs">65Mn</text>
<text x="921.5" y="298.5" font-size="6">1</text>
<text x="723.2" y="314.1" font-size="7.4" textLength="6" lengthAdjust="spacingAndGlyphs">11</text>
<text x="799.5" y="311.6" font-size="6.0" textLength="21" lengthAdjust="spacingAndGlyphs">轴承 32912</text>
<text x="892" y="311.9" font-size="6" textLength="7.5" lengthAdjust="spacingAndGlyphs">组件</text>
<text x="921.5" y="311.5" font-size="6">1</text>
<text x="723.2" y="326.1" font-size="7.4" textLength="6" lengthAdjust="spacingAndGlyphs">10</text>
<text x="799.5" y="323.6" font-size="6.0" textLength="22" lengthAdjust="spacingAndGlyphs">轴承 6005</text>
<text x="892" y="323.9" font-size="6" textLength="7.5" lengthAdjust="spacingAndGlyphs">组件</text>
<text x="921.5" y="323.5" font-size="6">2</text>
<text x="723.2" y="338.1" font-size="7.4" textLength="3.2" lengthAdjust="spacingAndGlyphs">9</text>
<text x="799.5" y="335.6" font-size="6.0" textLength="28.5" lengthAdjust="spacingAndGlyphs">孔用挡圈 42</text>
<text x="892" y="335.9" font-size="6" textLength="8" lengthAdjust="spacingAndGlyphs">65Mn</text>
<text x="921.5" y="335.5" font-size="6">1</text>
<text x="723.2" y="350.1" font-size="7.4" textLength="3.2" lengthAdjust="spacingAndGlyphs">8</text>
<text x="799.5" y="347.6" font-size="6.0" textLength="22" lengthAdjust="spacingAndGlyphs">轴承 32915</text>
<text x="892" y="347.9" font-size="6" textLength="7.5" lengthAdjust="spacingAndGlyphs">组件</text>
<text x="921.5" y="347.5" font-size="6">1</text>
<text x="723.2" y="362.1" font-size="7.4" textLength="3.2" lengthAdjust="spacingAndGlyphs">7</text>
<text x="799.5" y="359.6" font-size="6.0" textLength="34" lengthAdjust="spacingAndGlyphs">内六角螺钉 M6×25</text>
<text x="892" y="359.9" font-size="6" textLength="8" lengthAdjust="spacingAndGlyphs">Q235</text>
<text x="921.5" y="359.5" font-size="6">6</text>
<text x="723.2" y="374.1" font-size="7.4" textLength="3.2" lengthAdjust="spacingAndGlyphs">6</text>
<text x="799.5" y="371.6" font-size="6.0" textLength="33" lengthAdjust="spacingAndGlyphs">O型圈 38×2.65</text>
<text x="892" y="371.9" font-size="6" textLength="7.5" lengthAdjust="spacingAndGlyphs">橡胶</text>
<text x="921.5" y="371.5" font-size="6">1</text>
<text x="723.2" y="386.1" font-size="7.4" textLength="3.2" lengthAdjust="spacingAndGlyphs">5</text>
<text x="799.5" y="383.6" font-size="6.0" textLength="33" lengthAdjust="spacingAndGlyphs">O型圈 112×2.65</text>
<text x="892" y="383.9" font-size="6" textLength="7.5" lengthAdjust="spacingAndGlyphs">橡胶</text>
<text x="921.5" y="383.5" font-size="6">1</text>
<text x="723.2" y="398.1" font-size="7.4" textLength="3.2" lengthAdjust="spacingAndGlyphs">4</text>
<text x="799.5" y="395.6" font-size="6.0" textLength="28.5" lengthAdjust="spacingAndGlyphs">孔用挡圈 32</text>
<text x="892" y="395.9" font-size="6" textLength="8" lengthAdjust="spacingAndGlyphs">65Mn</text>
<text x="921.5" y="395.5" font-size="6">1</text>
<text x="723.2" y="410.1" font-size="7.4" textLength="3.2" lengthAdjust="spacingAndGlyphs">3</text>
<text x="799.5" y="407.6" font-size="6.0" textLength="49" lengthAdjust="spacingAndGlyphs">开槽螺钉 M5×12(配垫圈)</text>
<text x="892" y="407.9" font-size="6" textLength="3.4" lengthAdjust="spacingAndGlyphs">45</text>
<text x="921.5" y="407.5" font-size="6">8</text>
<text x="723.2" y="422.1" font-size="7.4" textLength="3.2" lengthAdjust="spacingAndGlyphs">2</text>
<text x="799.5" y="419.6" font-size="6.0" textLength="34" lengthAdjust="spacingAndGlyphs">内六角螺钉 M5×16</text>
<text x="892" y="419.9" font-size="6" textLength="8" lengthAdjust="spacingAndGlyphs">Q235</text>
<text x="921.5" y="419.5" font-size="6">2</text>
<text x="723.2" y="434.1" font-size="7.4" textLength="3.2" lengthAdjust="spacingAndGlyphs">1</text>
<text x="748" y="432.0" font-size="6" textLength="12.5" lengthAdjust="spacingAndGlyphs">CGJ-15</text>
<text x="799.5" y="431.6" font-size="6.0" textLength="16" lengthAdjust="spacingAndGlyphs">手轮 201</text>
<text x="892" y="431.9" font-size="6" textLength="3.4" lengthAdjust="spacingAndGlyphs">45</text>
<text x="921.5" y="431.5" font-size="6">1</text>
<text x="720.8" y="444.3" font-size="6.5" textLength="11.5" lengthAdjust="spacingAndGlyphs" font-weight="bold">序号</text>
<text x="734" y="446.3" font-size="6.5" textLength="11.5" lengthAdjust="spacingAndGlyphs" font-weight="bold">图幅</text>
<text x="758.5" y="446.3" font-size="6.5" textLength="11.5" lengthAdjust="spacingAndGlyphs" font-weight="bold">代号</text>
<text x="820.7" y="446.3" font-size="6.5" textLength="31" lengthAdjust="spacingAndGlyphs" font-weight="bold">名称及规格</text>
<text x="890" y="444.8" font-size="6.5" textLength="12.5" lengthAdjust="spacingAndGlyphs" font-weight="bold">材料</text>
<text x="921" y="446.3" font-size="6.5" textLength="12.5" lengthAdjust="spacingAndGlyphs" font-weight="bold">数量</text>
<text x="947" y="441.8" font-size="5.5" textLength="10.5" lengthAdjust="spacingAndGlyphs" font-weight="bold">单件</text>
<text x="947" y="447.5" font-size="5.5" textLength="10.5" lengthAdjust="spacingAndGlyphs" font-weight="bold">总计</text>
<text x="986" y="446.3" font-size="6.5" textLength="12.5" lengthAdjust="spacingAndGlyphs" font-weight="bold">备注</text>
<text x="723.2" y="469.9" font-size="7.4" textLength="6" lengthAdjust="spacingAndGlyphs">16</text>
<text x="748" y="469.0" font-size="6" textLength="12.5" lengthAdjust="spacingAndGlyphs">CGJ-16</text>
<text x="799.5" y="469.1" font-size="6.0" textLength="37" lengthAdjust="spacingAndGlyphs">偏心套(含平衡块)</text>
<text x="892" y="467.6" font-size="5" textLength="3.4" lengthAdjust="spacingAndGlyphs">45</text>
<text x="921.5" y="467.2" font-size="5">1</text>
<text x="723.2" y="481.9" font-size="7.4" textLength="6" lengthAdjust="spacingAndGlyphs">15</text>
<text x="748" y="481.0" font-size="6" textLength="12.5" lengthAdjust="spacingAndGlyphs">CGJ-15</text>
<text x="799.5" y="481.1" font-size="6.0" textLength="30" lengthAdjust="spacingAndGlyphs">电机连接法兰盘</text>
<text x="892" y="479.6" font-size="5" textLength="3.4" lengthAdjust="spacingAndGlyphs">45</text>
<text x="921.5" y="479.2" font-size="5">1</text>
<text x="723.2" y="493.9" font-size="7.4" textLength="6" lengthAdjust="spacingAndGlyphs">14</text>
<text x="748" y="493.0" font-size="6" textLength="12.5" lengthAdjust="spacingAndGlyphs">CGJ-14</text>
<text x="799.5" y="493.1" font-size="6.0" textLength="12" lengthAdjust="spacingAndGlyphs">压盖</text>
<text x="892" y="491.6" font-size="5" textLength="3.4" lengthAdjust="spacingAndGlyphs">45</text>
<text x="921.5" y="491.2" font-size="5">1</text>
<text x="723.2" y="505.9" font-size="7.4" textLength="6" lengthAdjust="spacingAndGlyphs">13</text>
<text x="748" y="505.0" font-size="6" textLength="12.5" lengthAdjust="spacingAndGlyphs">CGJ-13</text>
<text x="799.5" y="505.1" font-size="6.0" textLength="13" lengthAdjust="spacingAndGlyphs">输出轴</text>
<text x="892" y="503.6" font-size="5" textLength="8" lengthAdjust="spacingAndGlyphs">40Cr</text>
<text x="921.5" y="503.2" font-size="5">1</text>
<text x="723.2" y="517.9" font-size="7.4" textLength="6" lengthAdjust="spacingAndGlyphs">12</text>
<text x="748" y="517.0" font-size="6" textLength="12.5" lengthAdjust="spacingAndGlyphs">CGJ-12</text>
<text x="799.5" y="517.1" font-size="6.0" textLength="17" lengthAdjust="spacingAndGlyphs">压盖 M</text>
<text x="892" y="515.6" font-size="5" textLength="3.4" lengthAdjust="spacingAndGlyphs">A3</text>
<text x="921.5" y="515.2" font-size="5">5</text>
<text x="723.2" y="529.9" font-size="7.4" textLength="6" lengthAdjust="spacingAndGlyphs">11</text>
<text x="748" y="529.0" font-size="6" textLength="12.5" lengthAdjust="spacingAndGlyphs">CGJ-11</text>
<text x="799.5" y="529.1" font-size="6.0" textLength="12" lengthAdjust="spacingAndGlyphs">大齿轮</text>
<text x="892" y="527.6" font-size="5" textLength="8" lengthAdjust="spacingAndGlyphs">40Cr</text>
<text x="921.5" y="527.2" font-size="5">1</text>
<text x="723.2" y="541.9" font-size="7.4" textLength="6" lengthAdjust="spacingAndGlyphs">10</text>
<text x="748" y="541.0" font-size="6" textLength="12.5" lengthAdjust="spacingAndGlyphs">CGJ-10</text>
<text x="799.5" y="541.1" font-size="6.0" textLength="11" lengthAdjust="spacingAndGlyphs">压盖</text>
<text x="892" y="539.6" font-size="5" textLength="8" lengthAdjust="spacingAndGlyphs">40Cr</text>
<text x="921.5" y="539.2" font-size="5">5</text>
<text x="723.2" y="553.9" font-size="7.4" textLength="3.2" lengthAdjust="spacingAndGlyphs">9</text>
<text x="748" y="553.0" font-size="6" textLength="12.5" lengthAdjust="spacingAndGlyphs">CGJ-09</text>
<text x="799.5" y="553.1" font-size="6.0" textLength="16.5" lengthAdjust="spacingAndGlyphs">压盖组件</text>
<text x="892" y="551.6" font-size="5" textLength="3.4" lengthAdjust="spacingAndGlyphs">45</text>
<text x="921.5" y="551.2" font-size="5">1</text>
<text x="723.2" y="565.9" font-size="7.4" textLength="3.2" lengthAdjust="spacingAndGlyphs">8</text>
<text x="748" y="565.0" font-size="6" textLength="12.5" lengthAdjust="spacingAndGlyphs">CGJ-08</text>
<text x="799.5" y="565.1" font-size="6.0" textLength="8.5" lengthAdjust="spacingAndGlyphs">箱体</text>
<text x="892" y="563.6" font-size="5" textLength="3.4" lengthAdjust="spacingAndGlyphs">A3</text>
<text x="919.5" y="563.2" font-size="5" textLength="17.8" lengthAdjust="spacingAndGlyphs">Z=45,46</text>
<text x="723.2" y="578.9" font-size="7.4" textLength="3.2" lengthAdjust="spacingAndGlyphs">7</text>
<text x="748" y="578.0" font-size="6" textLength="12.5" lengthAdjust="spacingAndGlyphs">CGJ-07</text>
<text x="799.5" y="578.1" font-size="6.0" textLength="22" lengthAdjust="spacingAndGlyphs">箱体连接件</text>
<text x="892" y="576.6" font-size="5" textLength="3.4" lengthAdjust="spacingAndGlyphs">45</text>
<text x="919.5" y="576.2" font-size="5" textLength="10.6" lengthAdjust="spacingAndGlyphs">Z=46</text>
<text x="723.2" y="590.9" font-size="7.4" textLength="3.2" lengthAdjust="spacingAndGlyphs">6</text>
<text x="748" y="590.0" font-size="6" textLength="12.5" lengthAdjust="spacingAndGlyphs">CGJ-06</text>
<text x="799.5" y="590.1" font-size="6.0" textLength="12" lengthAdjust="spacingAndGlyphs">蜗杆轴</text>
<text x="892" y="588.6" font-size="5" textLength="3.4" lengthAdjust="spacingAndGlyphs">A3</text>
<text x="921.5" y="588.2" font-size="5">1</text>
<text x="723.2" y="602.9" font-size="7.4" textLength="3.2" lengthAdjust="spacingAndGlyphs">5</text>
<text x="748" y="602.0" font-size="6" textLength="12.5" lengthAdjust="spacingAndGlyphs">CGJ-05</text>
<text x="799.5" y="602.1" font-size="6.0" textLength="12" lengthAdjust="spacingAndGlyphs">密封</text>
<text x="892" y="600.6" font-size="5" textLength="3.4" lengthAdjust="spacingAndGlyphs">45</text>
<text x="921.5" y="600.2" font-size="5">1</text>
<text x="723.2" y="614.9" font-size="7.4" textLength="3.2" lengthAdjust="spacingAndGlyphs">4</text>
<text x="748" y="614.0" font-size="6" textLength="12.5" lengthAdjust="spacingAndGlyphs">CGJ-04</text>
<text x="799.5" y="614.1" font-size="6.0" textLength="8.5" lengthAdjust="spacingAndGlyphs">轴套</text>
<text x="892" y="612.6" font-size="5" textLength="3.4" lengthAdjust="spacingAndGlyphs">45</text>
<text x="921.5" y="612.2" font-size="5">1</text>
<text x="723.2" y="626.9" font-size="7.4" textLength="3.2" lengthAdjust="spacingAndGlyphs">3</text>
<text x="748" y="626.0" font-size="6" textLength="12.5" lengthAdjust="spacingAndGlyphs">CGJ-03</text>
<text x="799.5" y="626.1" font-size="6.0" textLength="17" lengthAdjust="spacingAndGlyphs">密封盖 M</text>
<text x="892" y="624.6" font-size="5" textLength="3.4" lengthAdjust="spacingAndGlyphs">45</text>
<text x="921.5" y="624.2" font-size="5">1</text>
<text x="723.2" y="638.9" font-size="7.4" textLength="3.2" lengthAdjust="spacingAndGlyphs">2</text>
<text x="748" y="638.0" font-size="6" textLength="12.5" lengthAdjust="spacingAndGlyphs">CGJ-02</text>
<text x="799.5" y="638.1" font-size="6.0" textLength="12" lengthAdjust="spacingAndGlyphs">手柄</text>
<text x="892" y="636.6" font-size="5" textLength="3.4" lengthAdjust="spacingAndGlyphs">45</text>
<text x="921.5" y="636.2" font-size="5">1</text>
<text x="723.2" y="650.9" font-size="7.4" textLength="3.2" lengthAdjust="spacingAndGlyphs">1</text>
<text x="748" y="650.0" font-size="6" textLength="12.5" lengthAdjust="spacingAndGlyphs">CGJ-01</text>
<text x="799.5" y="650.1" font-size="6.0" textLength="8.5" lengthAdjust="spacingAndGlyphs">手轮</text>
<text x="892" y="648.6" font-size="5" textLength="3.4" lengthAdjust="spacingAndGlyphs">45</text>
<text x="921.5" y="648.2" font-size="5">1</text>
<text x="720.8" y="661.3" font-size="6.5" textLength="11.5" lengthAdjust="spacingAndGlyphs" font-weight="bold">序号</text>
<text x="734" y="663.3" font-size="6.5" textLength="11.5" lengthAdjust="spacingAndGlyphs" font-weight="bold">图幅</text>
<text x="758.5" y="663.3" font-size="6.5" textLength="11.5" lengthAdjust="spacingAndGlyphs" font-weight="bold">代号</text>
<text x="820.7" y="663.3" font-size="6.5" textLength="31" lengthAdjust="spacingAndGlyphs" font-weight="bold">名称及规格</text>
<text x="890" y="661.8" font-size="6.5" textLength="12.5" lengthAdjust="spacingAndGlyphs" font-weight="bold">材料</text>
<text x="921" y="663.3" font-size="6.5" textLength="12.5" lengthAdjust="spacingAndGlyphs" font-weight="bold">数量</text>
<text x="947" y="658.8" font-size="5.5" textLength="10.5" lengthAdjust="spacingAndGlyphs" font-weight="bold">单件</text>
<text x="947" y="664.5" font-size="5.5" textLength="10.5" lengthAdjust="spacingAndGlyphs" font-weight="bold">总计</text>
<text x="986" y="663.3" font-size="6.5" textLength="12.5" lengthAdjust="spacingAndGlyphs" font-weight="bold">备注</text>
<text x="721" y="706.6" font-size="6" textLength="8.5" lengthAdjust="spacingAndGlyphs" font-weight="bold">标记</text>
<text x="733.8" y="706.6" font-size="6" textLength="11.5" lengthAdjust="spacingAndGlyphs" font-weight="bold">处数</text>
<text x="746" y="706.6" font-size="6" textLength="29.5" lengthAdjust="spacingAndGlyphs" font-weight="bold">更改文件号</text>
<text x="785.8" y="706.6" font-size="6" textLength="12.5" lengthAdjust="spacingAndGlyphs" font-weight="bold">签字</text>
<text x="805" y="706.6" font-size="6" textLength="11.5" lengthAdjust="spacingAndGlyphs" font-weight="bold">日期</text>
<text x="723.4" y="715.4" font-size="6" textLength="21.5" lengthAdjust="spacingAndGlyphs" font-weight="bold">CAD设计</text>
<text x="774" y="715.0" font-size="6" textLength="17.5" lengthAdjust="spacingAndGlyphs" font-weight="bold">标准化</text>
<text x="727" y="722.8" font-size="6" textLength="11.5" lengthAdjust="spacingAndGlyphs" font-weight="bold">校对</text>
<text x="778.4" y="722.8" font-size="6" textLength="10.5" lengthAdjust="spacingAndGlyphs" font-weight="bold">审定</text>
<text x="727" y="731.6" font-size="6" textLength="11.5" lengthAdjust="spacingAndGlyphs" font-weight="bold">审核</text>
<text x="727" y="740.2" font-size="6" textLength="11.5" lengthAdjust="spacingAndGlyphs" font-weight="bold">工艺</text>
<text x="778" y="740.2" font-size="6" textLength="11" lengthAdjust="spacingAndGlyphs" font-weight="bold">日期</text>
<text x="828" y="715.2" font-size="5.5" textLength="24" lengthAdjust="spacingAndGlyphs" font-weight="bold">图样标记</text>
<text x="886" y="715.2" font-size="5.5" textLength="11.5" lengthAdjust="spacingAndGlyphs" font-weight="bold">重量</text>
<text x="906.8" y="715.2" font-size="5.5" textLength="11" lengthAdjust="spacingAndGlyphs" font-weight="bold">比例</text>
<text x="827" y="738.8" font-size="6" textLength="7" lengthAdjust="spacingAndGlyphs" font-weight="bold">共</text>
<text x="855.8" y="738.8" font-size="6" textLength="6" lengthAdjust="spacingAndGlyphs" font-weight="bold">页</text>
<text x="878.7" y="738.8" font-size="6" textLength="7" lengthAdjust="spacingAndGlyphs" font-weight="bold">第</text>
<text x="903" y="738.8" font-size="6" textLength="6.3" lengthAdjust="spacingAndGlyphs" font-weight="bold">页</text>
<text x="848.5" y="689.8" font-size="17.5" textLength="33.5" lengthAdjust="spacingAndGlyphs" font-weight="300" stroke="none">组合件</text>
<text x="950.5" y="711" font-size="16.5" textLength="33" lengthAdjust="spacingAndGlyphs" font-weight="300" stroke="none">装配图</text>
<text x="946.6" y="735" font-size="17" textLength="33.7" lengthAdjust="spacingAndGlyphs" font-weight="300" stroke="none">CGJ-00</text>
<text x="36" y="607.6" font-size="5.8" textLength="42" lengthAdjust="spacingAndGlyphs" font-weight="bold">借(通)用件登记</text>
<text x="48.2" y="616.4" font-size="6.5" textLength="12" lengthAdjust="spacingAndGlyphs" font-weight="bold">描图</text>
<text x="48.2" y="638.4" font-size="6.5" textLength="12" lengthAdjust="spacingAndGlyphs" font-weight="bold">描校</text>
<text x="35.8" y="659.4" font-size="6.5" textLength="29.5" lengthAdjust="spacingAndGlyphs" font-weight="bold">旧底图总号</text>
<text x="37" y="680.8" font-size="6.5" textLength="23" lengthAdjust="spacingAndGlyphs" font-weight="bold">底图总号</text>
<text x="48.2" y="704.4" font-size="6.5" textLength="12" lengthAdjust="spacingAndGlyphs" font-weight="bold">签字</text>
<text x="48.6" y="726.7" font-size="6.5" textLength="11.5" lengthAdjust="spacingAndGlyphs" font-weight="bold">日期</text>
</g>

</svg>
</body></html>
